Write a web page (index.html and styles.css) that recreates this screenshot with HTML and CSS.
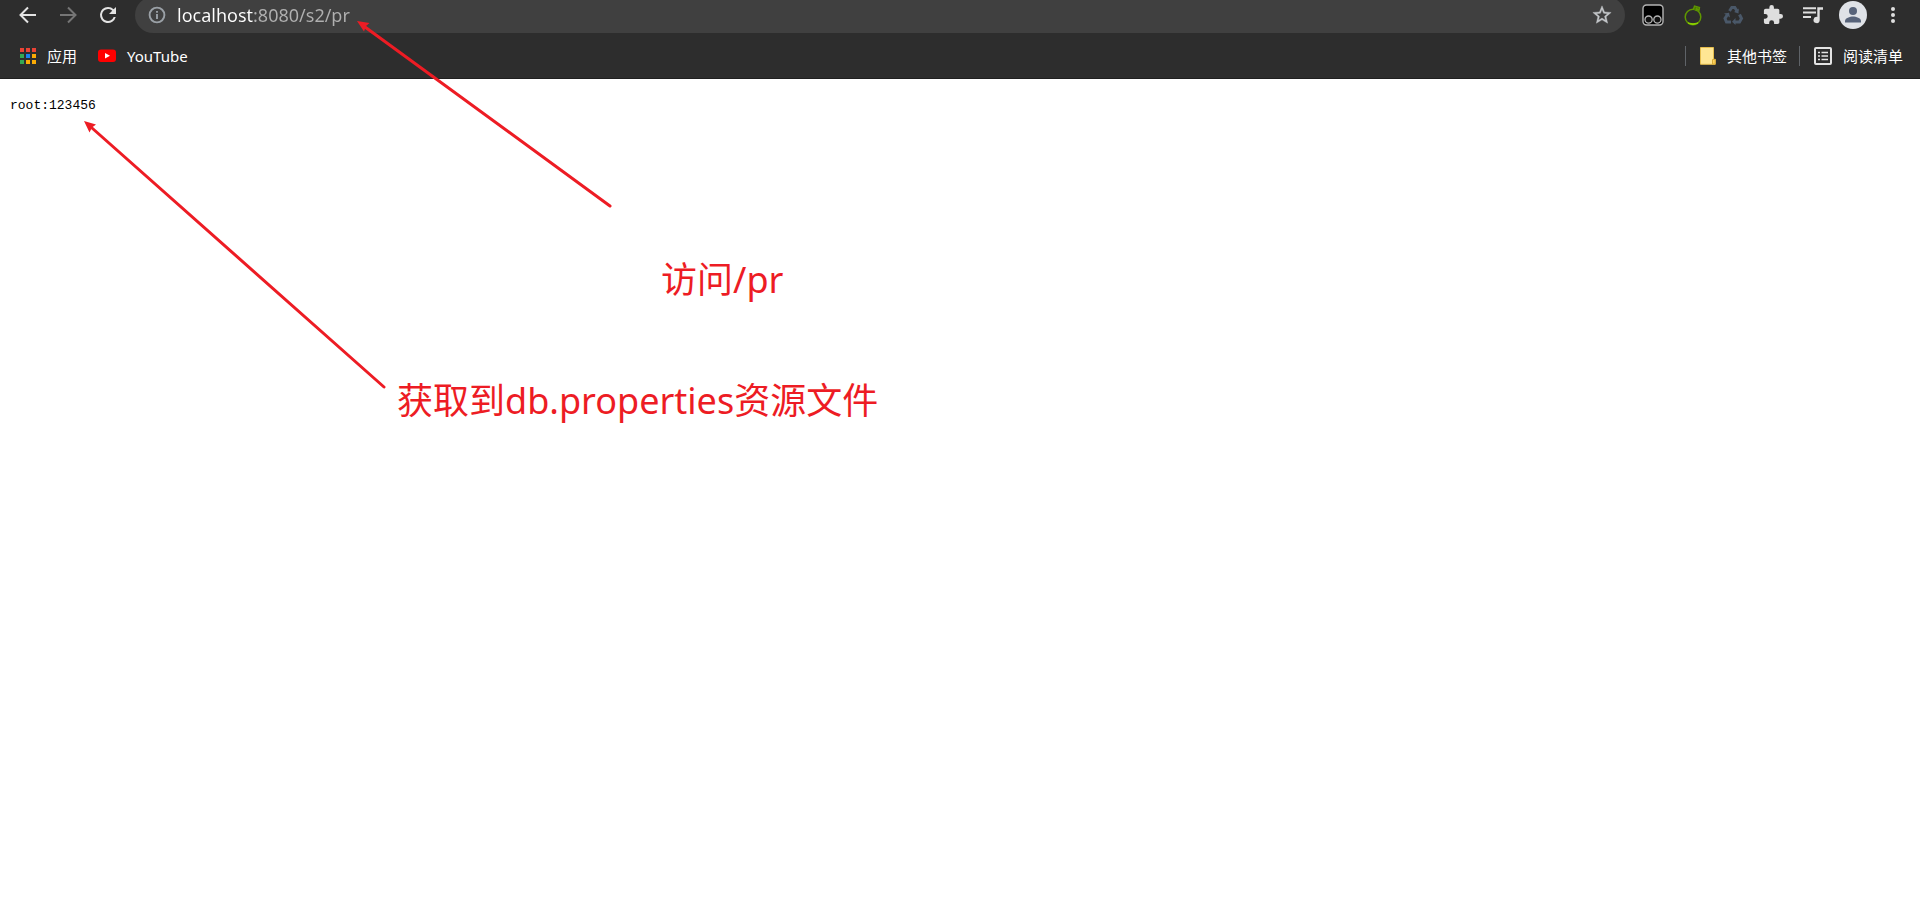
FILE: index.html
```html
<!DOCTYPE html>
<html lang="zh-CN">
<head>
<meta charset="utf-8">
<title>localhost:8080/s2/pr</title>
<link rel="stylesheet" href="styles.css">
</head>
<body>
<header class="chrome">
  <nav class="toolbar">
    <button class="tool" aria-label="Back"><svg class="icon" width="24" height="24" viewBox="0 0 24 24"><path d="M20 12H5M12 4.500 4.500 12l7.500 7.500" fill="none" stroke="#e3e3e3" stroke-width="2"/></svg></button>
    <button class="tool" aria-label="Forward"><svg class="icon" width="24" height="24" viewBox="0 0 24 24"><path d="M4 12h15M12 4.500 19.500 12 12 19.500" fill="none" stroke="#757575" stroke-width="2"/></svg></button>
    <button class="tool" aria-label="Reload"><svg class="icon" width="24" height="24" viewBox="0 0 24 24"><path d="M17.650 6.350A7.960 7.960 0 0 0 12 4a8 8 0 1 0 7.730 10h-2.080A6 6 0 1 1 12 6c1.660 0 3.140.690 4.220 1.780L13 11h7V4z" fill="#e3e3e3"/></svg></button>
    <div class="omnibox">
      <button class="site" aria-label="Site information"><svg class="icon" width="20" height="20" viewBox="0 0 20 20"><circle cx="10" cy="10" r="7.400" fill="none" stroke="#9aa0a6" stroke-width="1.900"/><path d="M10 9v5M10 6v1.800" stroke="#9aa0a6" stroke-width="1.900"/></svg></button>
      <input class="url" type="text" value="localhost:8080/s2/pr" aria-label="Address">
      <button class="star" aria-label="Bookmark this page"><svg class="icon" width="22" height="22" viewBox="0 0 24 24"><path d="m22 9.240-7.190-.620L12 2 9.190 8.630 2 9.240l5.460 4.730L5.820 21 12 17.270 18.180 21l-1.630-7.030zM12 15.400l-3.760 2.270 1-4.280-3.320-2.880 4.380-.380L12 6.100l1.710 4.040 4.380.380-3.320 2.880 1 4.280z" fill="#c4c7ca" stroke="#c4c7ca" stroke-width=".400"/></svg></button>
    </div>
    <div class="extensions">
      <button class="tool" aria-label="Tampermonkey"><svg class="icon" width="24" height="24" viewBox="0 0 24 24"><rect x="2" y="2" width="20" height="20" rx="3.500" fill="#000" stroke="#b4b4b4" stroke-width="1.400"/><g fill="#111" stroke="#b4b4b4" stroke-width="1.300"><circle cx="7.600" cy="16.600" r="3.600"/><circle cx="16.400" cy="16.600" r="3.600"/></g></svg></button>
      <button class="tool" aria-label="Green extension"><svg class="icon" width="24" height="24" viewBox="0 0 24 24"><circle cx="12" cy="14" r="7.800" fill="none" stroke="#5f9700" stroke-width="1.500"/><path d="M7 20q5 1.500 10 0-5 3-10 0z" fill="#9be000" stroke="#8bd000"/><path d="M12.500 6 13.500 3l5 1.500-.500 3-2.500-2-.500 2.500" fill="#4b7800" stroke="#5f9700" stroke-width="1.300"/></svg></button>
      <button class="tool" aria-label="Recycle extension"><svg class="icon" width="24" height="24" viewBox="0 0 24 24"><g fill="none" stroke="#4a5869" stroke-width="3"><path d="m8.500 8 2.300-3.500h3l2.500 4"/><path d="m18.500 11.500 2 4-2 3.500h-5"/><path d="M10 19H5.500L4 15.500l2.500-4"/></g><path d="m17.800 5.500-.300 5-4.500-1.600zM14.500 15v7l-3.500-3.300zM3 10.500l5-.800 1 4.800z" fill="#4a5869"/></svg></button>
      <button class="tool" aria-label="Extensions"><svg class="icon" width="20" height="20" viewBox="1 1 22 22"><path d="M20.500 11H19V7a2 2 0 0 0-2-2h-4V3.500a2.500 2.500 0 0 0-5 0V5H4a2 2 0 0 0-2 2v3.800h1.500a2.700 2.700 0 0 1 0 5.400H2V20a2 2 0 0 0 2 2h3.800v-1.500a2.700 2.700 0 0 1 5.400 0V22H17a2 2 0 0 0 2-2v-4h1.500a2.500 2.500 0 0 0 0-5z" fill="#dedede"/></svg></button>
      <button class="tool" aria-label="Media controls"><svg class="icon" width="24" height="24" viewBox="0 0 24 24"><path d="M2 5.300h13M2 9.600h13M2 14h8" stroke="#dedede" stroke-width="2"/><path d="M16.300 4.300H22v2.500h-3.300V17a3.100 3.100 0 1 1-2.400-3z" fill="#dedede"/></svg></button>
      <button class="tool" aria-label="Profile"><svg class="icon" width="28" height="28" viewBox="0 0 28 28"><circle cx="14" cy="14" r="14" fill="#dfe2e7"/><circle cx="14" cy="10" r="4" fill="#57637a"/><path d="M6 21.500V20c0-3 5-4.500 8-4.500s8 1.500 8 4.500v1.500z" fill="#57637a"/></svg></button>
      <button class="tool" aria-label="Menu"><svg class="icon" width="24" height="24" viewBox="0 0 24 24"><g fill="#dedede"><circle cx="12" cy="6" r="2"/><circle cx="12" cy="12" r="2"/><circle cx="12" cy="18" r="2"/></g></svg></button>
    </div>
  </nav>
  <nav class="bookmarks">
    <a class="mark" href="#"><svg class="icon" width="16" height="16" viewBox="0 0 16 16"><path d="M0 0h4v4H0zM6 0h4v4H6zM12 0h4v4h-4z" fill="#ea4335"/><path d="M0 6h4v4H0zM0 12h4v4H0z" fill="#34a853"/><path d="M6 6h4v4H6z" fill="#1a82f0"/><path d="M12 6h4v4h-4zM6 12h4v4H6zM12 12h4v4h-4z" fill="#fbab05"/></svg><span>应用</span></a>
    <a class="mark" href="#"><svg class="icon" width="18" height="18" viewBox="0 0 18 18"><rect y="2.500" width="18" height="12.500" rx="3" fill="#f00"/><path d="m7 6 5 2.700-5 2.700z" fill="#fff"/></svg><span>YouTube</span></a>
    <div class="bookmarks-end">
      <a class="mark folder" href="#"><svg class="icon" width="16" height="18" viewBox="0 0 16 18"><path d="M.500.500h13v11.800h1.700v5H.500z" fill="#ffe694" stroke="#e5bd4d"/><path d="M12.500 17v-4.500h2.700v4.700z" fill="#ffd35c" stroke="#d7a936"/></svg><span>其他书签</span></a>
      <button class="mark reading"><svg class="icon" width="18" height="18" viewBox="0 0 18 18"><rect x="1" y="1" width="16" height="16" rx="1" fill="none" stroke="#e3e3e3" stroke-width="2"/><path d="M4 5.500h2M7.500 5.500H14M4 9h2M7.500 9H14M4 12.500h2M7.500 12.500H14" stroke="#e3e3e3" stroke-width="1.700"/></svg><span>阅读清单</span></button>
    </div>
  </nav>
</header>
<main class="page">
  <pre class="output">root:123456</pre>
</main>
<aside class="notes">
  <svg class="arrows" width="640" height="400" viewBox="0 0 640 400">
    <g stroke="#ed1c24" stroke-width="3" stroke-linecap="round"><path d="M610 206 365 27"/><path d="M384 387 92 128"/></g>
    <g fill="#ed1c24"><path d="m357 21 12.500 2-3.500 3-2 5.500z"/><path d="m84 121 12 3.500-4 3-2.500 5z"/></g>
  </svg>
  <p class="note note-visit">访问/pr</p>
  <p class="note note-file">获取到db.properties资源文件</p>
</aside>
</body>
</html>
```
FILE: styles.css
```css
body {
  margin: 0;
  background: #fff;
  font-family: "Noto Sans", "Noto Sans CJK SC", sans-serif;
}

button {
  margin: 0;
  padding: 0;
  border: 0;
  background: none;
  font: inherit;
}

.icon {
  display: block;
  flex: none;
}

.chrome {
  background: #2d2d2d;
  border-bottom: 1px solid #1f1f1f;
}

.toolbar {
  display: flex;
  height: 33px;
  padding: 0 7px 0 8px;
}

.tool {
  display: grid;
  place-items: center;
  width: 40px;
  height: 30px;
}

.omnibox {
  display: flex;
  flex: 1;
  align-items: center;
  box-sizing: border-box;
  height: 36px;
  margin: -3px 8px 0 7px;
  padding: 0 12px;
  border-radius: 18px;
  background: #404040;
}

.url {
  flex: 1;
  min-width: 0;
  margin-left: 10px;
  padding: 0;
  border: 0;
  outline: 0;
  color: #b0b0b0;
  background: linear-gradient(90deg, #fff 77px, #b0b0b0 77px);
  background-clip: text;
  -webkit-background-clip: text;
  -webkit-text-fill-color: transparent;
  font: 18px/28px "Noto Sans", sans-serif;
}

.extensions {
  display: flex;
}

.bookmarks {
  display: flex;
  align-items: center;
  gap: 21px;
  height: 45px;
  padding: 0 17px 0 20px;
}

.mark {
  display: flex;
  align-items: center;
  gap: 11px;
  height: 20px;
  color: #fff;
  font-size: 15px;
  line-height: 20px;
  text-decoration: none;
}

.bookmarks-end {
  display: flex;
  margin-left: auto;
  gap: 12px;
}

.folder,
.reading {
  padding-left: 14px;
  border-left: 1px solid #5f6368;
}

.output {
  margin: 17px 10px;
  color: #000;
  font: 13px/20px "Liberation Mono", monospace;
}

.notes {
  position: absolute;
  top: 0;
  left: 0;
  color: #ed1c24;
  pointer-events: none;
}

.arrows {
  display: block;
}

.note {
  position: absolute;
  margin: 0;
  font-size: 36px;
  line-height: 48px;
  white-space: nowrap;
}

.note-visit {
  top: 256px;
  left: 661px;
}

.note-file {
  top: 377px;
  left: 397px;
}
```
